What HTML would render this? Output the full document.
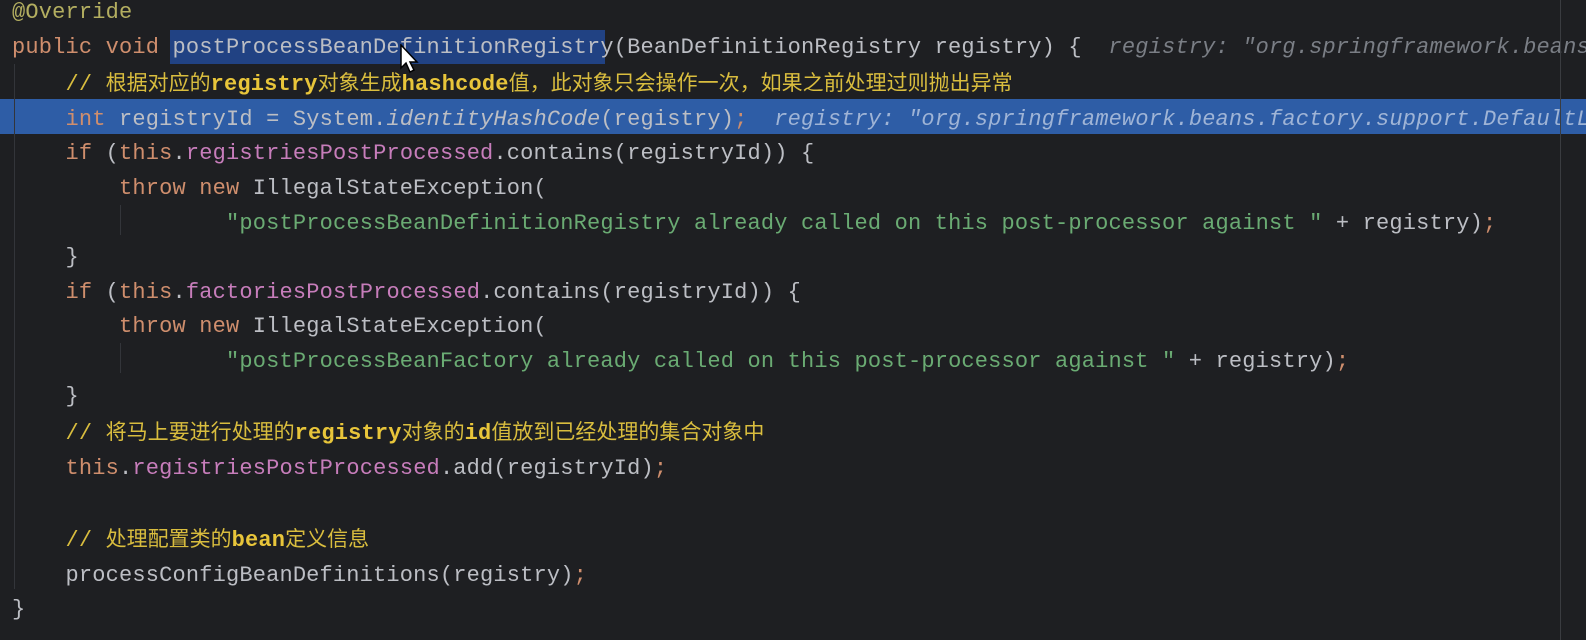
<!DOCTYPE html>
<html><head><meta charset="utf-8"><style>
html,body{margin:0;padding:0;background:#1e1f22;width:1586px;height:640px;overflow:hidden;}
.wrap{position:relative;width:1586px;height:640px;}
pre{position:absolute;left:12px;top:-4px;margin:0;font-family:"Liberation Mono",monospace;font-size:22px;letter-spacing:0.17px;line-height:34.6px;color:#bcbec4;white-space:pre;z-index:2;}
.k{color:#cf8e6d}.f{color:#c77dbb}.s{color:#6aab73}.a{color:#b3ae60}.i{font-style:italic}
.h{color:#7a7e85;font-style:italic}
.c{color:#d9bd3e}.cb{color:#e8c53a;font-weight:bold}
.z{font-family:"Noto Sans CJK SC",sans-serif;font-size:21px;letter-spacing:0;}
.hl{position:absolute;left:0;top:99px;width:1586px;height:35px;background:#2e5da6;z-index:1}
.sel{position:absolute;left:170px;top:30px;width:435px;height:34px;background:#214283;z-index:1}
.vl{position:absolute;left:1560px;top:0;width:1px;height:640px;background:#3a3c40;z-index:3}
.g{position:absolute;width:1px;background:#33353a;z-index:1}
.cur{position:absolute;left:400px;top:44px;z-index:5}
</style></head><body><div class="wrap">
<div class="sel"></div><div class="hl"></div>
<div class="g" style="left:14px;top:64px;height:525px"></div>
<div class="g" style="left:120px;top:205px;height:30px"></div>
<div class="g" style="left:120px;top:343px;height:30px"></div>
<pre><span class="a">@Override</span>
<span class="k">public void</span> postProcessBeanDefinitionRegistry(BeanDefinitionRegistry registry) {  <span class="h">registry: "org.springframework.beans</span>
    <span class="c">// <span class="z">根据对应的</span><span class="cb">registry</span><span class="z">对象生成</span><span class="cb">hashcode</span><span class="z">值，此对象只会操作一次，如果之前处理过则抛出异常</span></span>
    <span class="k">int</span> registryId = System.<span class="i">identityHashCode</span>(registry)<span class="k">;</span>  <span class="h" style="color:#9fb4d6">registry: "org.springframework.beans.factory.support.DefaultL</span>
    <span class="k">if</span> (<span class="k">this</span>.<span class="f">registriesPostProcessed</span>.contains(registryId)) {
        <span class="k">throw new</span> IllegalStateException(
                <span class="s">"postProcessBeanDefinitionRegistry already called on this post-processor against "</span> + registry)<span class="k">;</span>
    }
    <span class="k">if</span> (<span class="k">this</span>.<span class="f">factoriesPostProcessed</span>.contains(registryId)) {
        <span class="k">throw new</span> IllegalStateException(
                <span class="s">"postProcessBeanFactory already called on this post-processor against "</span> + registry)<span class="k">;</span>
    }
    <span class="c">// <span class="z">将马上要进行处理的</span><span class="cb">registry</span><span class="z">对象的</span><span class="cb">id</span><span class="z">值放到已经处理的集合对象中</span></span>
    <span class="k">this</span>.<span class="f">registriesPostProcessed</span>.add(registryId)<span class="k">;</span>

    <span class="c">// <span class="z">处理配置类的</span><span class="cb">bean</span><span class="z">定义信息</span></span>
    processConfigBeanDefinitions(registry)<span class="k">;</span>
}</pre>
<div class="vl"></div>
<svg class="cur" width="22" height="30" viewBox="0 0 22 30"><path d="M1 1 L1 24 L6 19 L10 28 L14 26 L10 18 L17 18 Z" fill="#fff" stroke="#000" stroke-width="1.5"/></svg>
</div></body></html>
